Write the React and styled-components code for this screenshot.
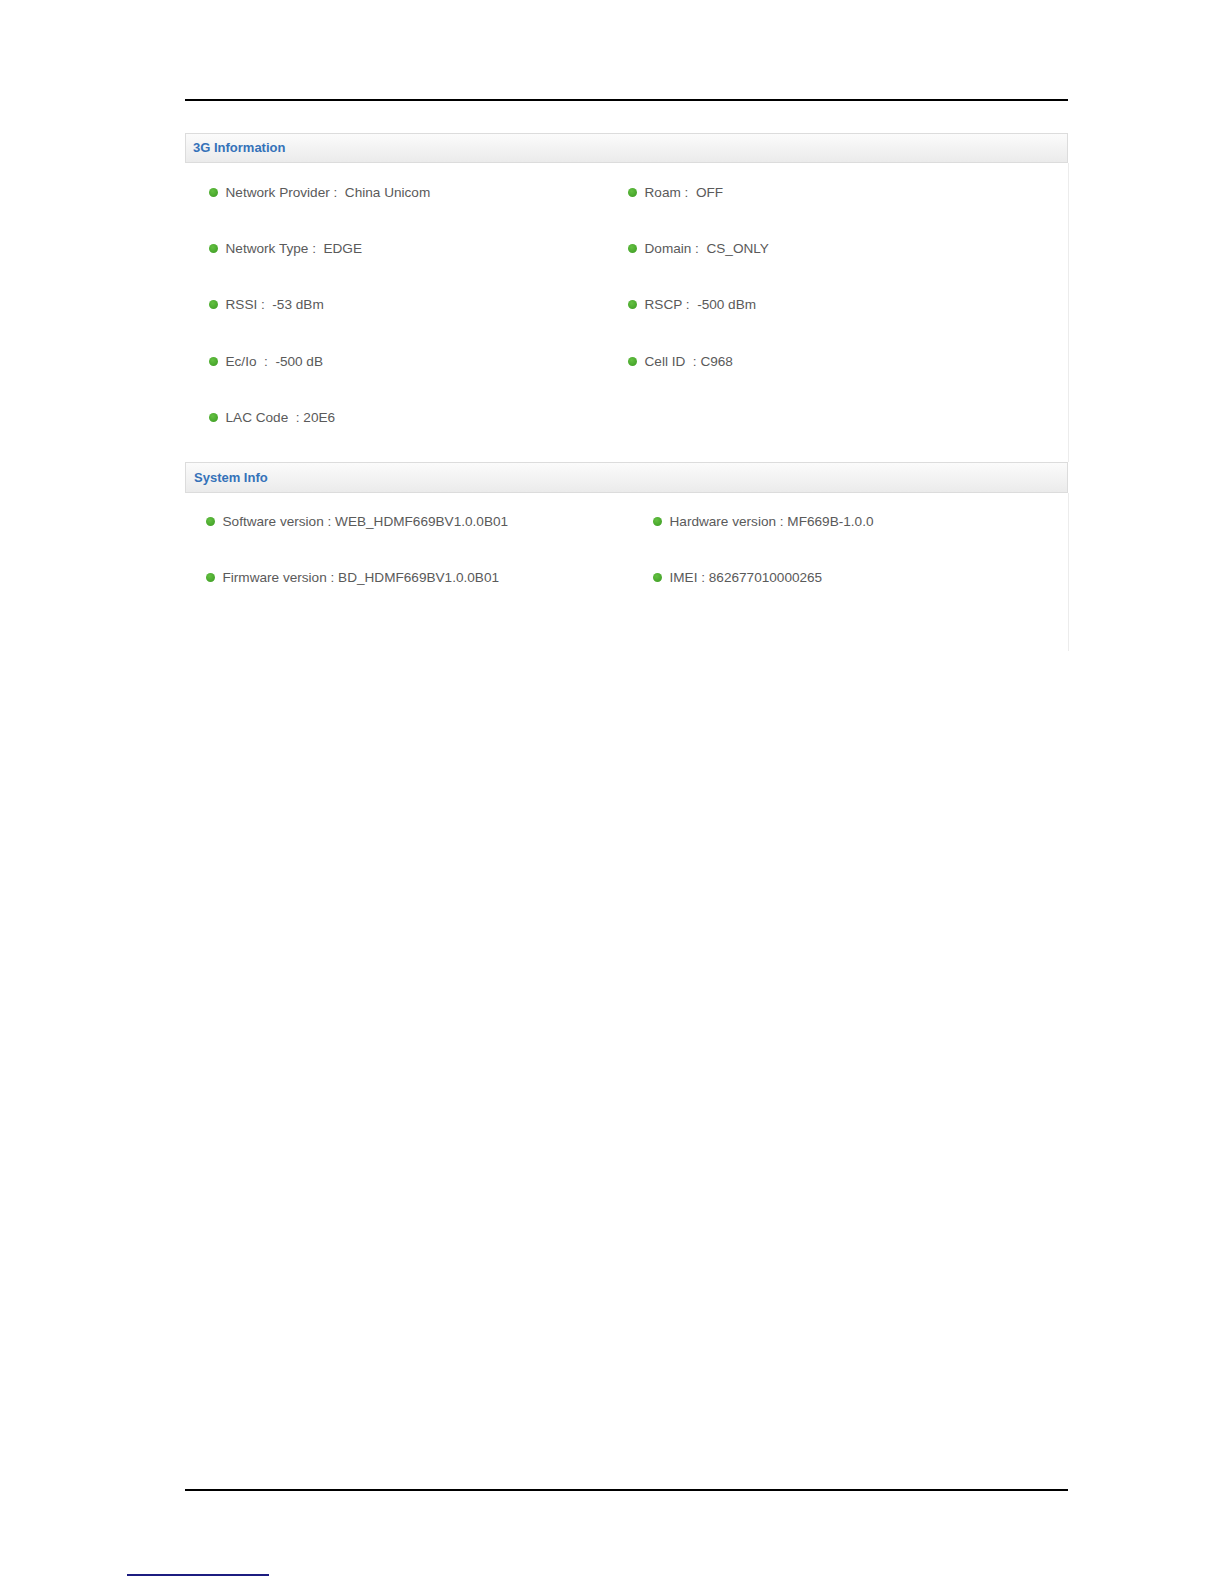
import React from 'react'
import styled, { createGlobalStyle } from 'styled-components'

const GlobalStyle = createGlobalStyle`
    body {
        margin: 0;
        background: #fff;
        font-family: 'Liberation Sans', Arial, sans-serif;
    }
`

const PageContainer = styled.main`
    display: flex;
    flex-direction: column;
    width: 1224px;
    height: 1584px;
    box-sizing: border-box;
    padding: 99px 0 8px;
    background: #fff;
`
const Rule = styled.div`
    width: 883px;
    height: 2px;
    margin-left: 185px;
    background: #000;
`
const Panel = styled.section`
    width: 884px;
    margin: 32px 0 0 185px;
`
const SectionHeader = styled.h2`
    box-sizing: border-box;
    width: 883px;
    height: ${(props) => props.$height}px;
    margin: 0;
    padding-left: ${(props) => props.$indent}px;
    border: 1px solid #dcdcdc;
    background: linear-gradient(#fbfbfb, #ebebeb);
    color: #3572b9;
    font-size: 13px;
    font-weight: bold;
    line-height: ${(props) => props.$height - 2}px;
`
const SectionBody = styled.div`
    display: grid;
    grid-template-columns: ${(props) => props.$firstCol}px 1fr;
    grid-auto-rows: ${(props) => props.$rowHeight}px;
    align-items: center;
    padding: 1px 0 ${(props) => props.$bottom}px ${(props) => props.$indent}px;
    border-right: 1px solid #ececec;
`
const Item = styled.div`
    display: flex;
    align-items: center;
    gap: 8px;
    color: #5a5a5a;
    font-size: 13.6px;
    white-space: pre;
`
const Dot = styled.span`
    flex: none;
    width: 9px;
    height: 9px;
    border-radius: 50%;
    background: radial-gradient(circle at 40% 35%, #63c041, #3b9a22);
`
const Footer = styled.footer`
    display: flex;
    flex-direction: column;
    margin-top: auto;
`
const FootnoteLine = styled.div`
    width: 142px;
    height: 2px;
    margin: 83px 0 0 127px;
    background: #1c1c80;
`

const networkInfo = [
    ['Network Provider :  ', 'China Unicom'],
    ['Roam :  ', 'OFF'],
    ['Network Type :  ', 'EDGE'],
    ['Domain :  ', 'CS_ONLY'],
    ['RSSI :  ', '-53 dBm'],
    ['RSCP :  ', '-500 dBm'],
    ['Ec/Io  :  ', '-500 dB'],
    ['Cell ID  : ', 'C968'],
    ['LAC Code  : ', '20E6'],
]

const systemInfo = [
    ['Software version : ', 'WEB_HDMF669BV1.0.0B01'],
    ['Hardware version : ', 'MF669B-1.0.0'],
    ['Firmware version : ', 'BD_HDMF669BV1.0.0B01'],
    ['IMEI : ', '862677010000265'],
]

function InfoItem({ label, value }) {
    return (
        <Item>
            <Dot />
            <span>
                {label}
                {value}
            </span>
        </Item>
    )
}

function App() {
    return (
        <PageContainer>
            <GlobalStyle />
            <Rule />
            <Panel>
                <SectionHeader $height={30} $indent={7}>
                    3G Information
                </SectionHeader>
                <SectionBody
                    $firstCol={419}
                    $rowHeight={56.4}
                    $indent={23.5}
                    $bottom={16}
                >
                    {networkInfo.map(([label, value]) => (
                        <InfoItem key={label} label={label} value={value} />
                    ))}
                </SectionBody>
                <SectionHeader $height={31} $indent={8}>
                    System Info
                </SectionHeader>
                <SectionBody
                    $firstCol={447}
                    $rowHeight={56}
                    $indent={20.5}
                    $bottom={45}
                >
                    {systemInfo.map(([label, value]) => (
                        <InfoItem key={label} label={label} value={value} />
                    ))}
                </SectionBody>
            </Panel>
            <Footer>
                <Rule />
                <FootnoteLine />
            </Footer>
        </PageContainer>
    )
}

export default App
